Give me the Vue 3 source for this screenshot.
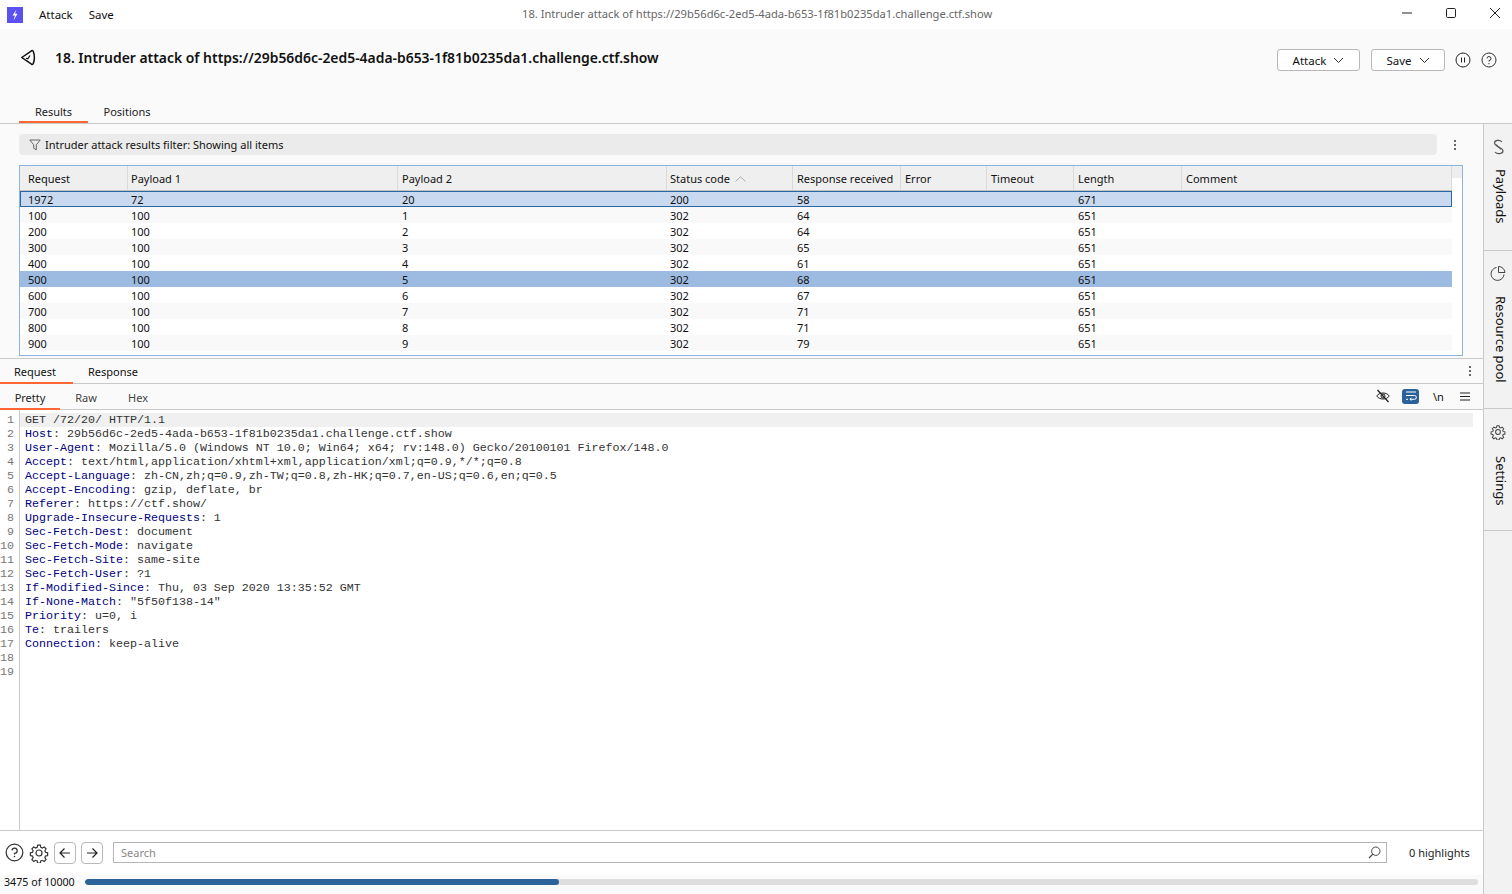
<template>
  <div class="window">
    <div class="titlebar">
      <div class="logo">
        <svg width="16" height="16" viewBox="0 0 16 16"><rect width="16" height="16" fill="#5b50f0" /><path d="M9.5 2.500 5.500 8.500H8L6.500 13.500 10.500 6.800H8Z" fill="#fff" /></svg>
      </div>
      <span class="menu-item">Attack</span>
      <span class="menu-item">Save</span>
      <span class="window-title">18. Intruder attack of https://29b56d6c-2ed5-4ada-b653-1f81b0235da1.challenge.ctf.show</span>
      <div class="window-controls">
        <svg width="12" height="12" viewBox="0 0 12 12"><path d="M1 6H11" stroke="#222" fill="none" /></svg>
        <svg width="12" height="12" viewBox="0 0 12 12"><rect x="1.500" y="1.500" width="9" height="9" rx="1.200" stroke="#222" fill="none" /></svg>
        <svg width="12" height="12" viewBox="0 0 12 12"><path d="M1 1 11 11M11 1 1 11" stroke="#222" fill="none" /></svg>
      </div>
    </div>

    <header class="page-head">
      <div class="head-row">
        <svg class="back-icon" width="16" height="17" viewBox="0 0 16 17"><path d="M1.800 8.500 11.500 1.800Q12.800 1.200 13.300 2.500 15.500 8.500 13.300 14.500 12.800 15.800 11.500 15.200Z" stroke="#111" stroke-width="1.500" stroke-linejoin="round" fill="none" /><path d="M6 9.200 7.800 9.800 10 6.500" stroke="#111" stroke-width="1.200" fill="none" /></svg>
        <h1 class="page-title">18. Intruder attack of https://29b56d6c-2ed5-4ada-b653-1f81b0235da1.challenge.ctf.show</h1>
        <button class="drop-btn attack-btn">Attack <svg width="11" height="7" viewBox="0 0 11 7"><path d="M1 1 5.500 5.500 10 1" stroke="#333" fill="none" /></svg></button>
        <button class="drop-btn save-btn">Save <svg width="11" height="7" viewBox="0 0 11 7"><path d="M1 1 5.500 5.500 10 1" stroke="#333" fill="none" /></svg></button>
        <svg class="head-icon" width="16" height="16" viewBox="0 0 16 16"><circle cx="8" cy="8" r="7" stroke="#222" fill="none" /><path d="M6.500 5.500v5M9.500 5.500v5" stroke="#222" fill="none" /></svg>
        <svg class="head-icon" width="16" height="16" viewBox="0 0 16 16"><circle cx="8" cy="8" r="7" stroke="#333" fill="none" /><path d="M6 6.300A2 2 0 1 1 8 8.500V9.600" stroke="#333" fill="none" /><path d="M8 11v1.200" stroke="#333" fill="none" /></svg>
      </div>
      <div class="top-tabs">
        <span class="tab active results-tab">Results</span>
        <span class="tab positions-tab">Positions</span>
      </div>
    </header>

    <div class="workspace">
      <main class="main">
        <section class="results">
          <div class="filter-row">
            <div class="filter-bar">
              <svg width="12" height="12" viewBox="0 0 12 12"><path d="M.8 1h10.400L7.300 5.800v5L4.700 9.300V5.800Z" stroke="#666" fill="none" /></svg>
              <span>Intruder attack results filter: Showing all items</span>
            </div>
            <svg class="kebab" width="4" height="12" viewBox="0 0 4 12"><circle cx="2" cy="2" r="1.100" fill="#444" /><circle cx="2" cy="6" r="1.100" fill="#444" /><circle cx="2" cy="10" r="1.100" fill="#444" /></svg>
          </div>
          <div class="table-box">
            <div class="table-inner">
              <div class="t-head">
                <div v-for="col in columns" :key="col.label" class="th" :style="{ width: col.width + 'px', paddingLeft: col.pad + 'px' }">
                  {{ col.label }}
                  <svg v-if="col.sorted" class="sort" width="11" height="6" viewBox="0 0 11 6"><path d="M.5 5.500 5.500 .8l5 4.700" stroke="#aaa" fill="none" /></svg>
                </div>
              </div>
              <div v-for="(row, i) in rows" :key="row[0]" class="t-row" :class="{ focused: i === 0, picked: i === 5, alt: i % 2 === 1 }">
                <div v-for="(cell, c) in row" :key="c" class="td" :style="{ width: columns[c].width + 'px', paddingLeft: columns[c].pad + 'px' }">{{ cell }}</div>
              </div>
            </div>
            <div class="scroll-col"></div>
          </div>
        </section>

        <div class="req-tabs">
          <span class="tab2 active req-tab">Request</span>
          <span class="tab2 res-tab">Response</span>
          <svg class="kebab req-kebab" width="4" height="12" viewBox="0 0 4 12"><circle cx="2" cy="2" r="1.100" fill="#444" /><circle cx="2" cy="6" r="1.100" fill="#444" /><circle cx="2" cy="10" r="1.100" fill="#444" /></svg>
        </div>
        <div class="view-tabs">
          <span class="tab3 active pretty-tab">Pretty</span>
          <span class="tab3 raw-tab">Raw</span>
          <span class="tab3 hex-tab">Hex</span>
          <div class="view-tools">
            <svg width="14" height="14" viewBox="0 0 14 14"><path d="M.8 7C3 3 11 3 13.200 7 11 11 3 11 .8 7Z" stroke="#222" fill="none" /><circle cx="7" cy="7" r="2" stroke="#222" fill="none" /><path d="M1.500 1 12.500 13" stroke="#222" stroke-width="1.300" /></svg>
            <span class="wrap-btn"><svg width="12" height="10" viewBox="0 0 12 10"><path d="M1 1h10M1 4.500h8.500a1.800 1.800 0 0 1 0 3.800H5M1 8.300h2M6.500 6.800 5 8.300l1.500 1.300" stroke="#fff" fill="none" /></svg></span>
            <span class="newline">\n</span>
            <svg width="10" height="9" viewBox="0 0 10 9"><path d="M0 1h10M0 4.500h10M0 8h10" stroke="#222" fill="none" /></svg>
          </div>
        </div>

        <div class="editor">
          <div class="gutter">
            <div v-for="n in 19" :key="n">{{ n }}</div>
          </div>
          <div class="code">
            <div v-for="(line, i) in requestLines" :key="i" class="code-line" :class="{ current: i === 0 }"><span class="hkey">{{ line[0] }}</span>{{ line[1] }}</div>
          </div>
        </div>

        <div class="search-row">
          <svg width="19" height="19" viewBox="0 0 20 20"><circle cx="10" cy="10" r="8.800" stroke="#333" stroke-width="1.300" fill="none" /><path d="M7.400 7.800a2.700 2.700 0 1 1 2.600 3v1.400" stroke="#333" stroke-width="1.300" fill="none" /><path d="M10 13.500v1.500" stroke="#333" stroke-width="1.400" /></svg>
          <svg class="bottom-gear" width="20" height="20" viewBox="0 0 20 20"><circle cx="10" cy="10" r="3" stroke="#333" stroke-width="1.200" fill="none" /><path d="M8.500 1.200h3l.5 2.500 1.700.8 2.200-1.300 2 2.200-1.400 2.100.7 1.700 2.400.6v3l-2.400.6-.7 1.700 1.400 2.100-2 2.200-2.200-1.300-1.700.8-.5 2.300h-3l-.5-2.300-1.700-.8-2.200 1.300-2-2.200 1.400-2.100-.7-1.700-2.400-.6v-3l2.400-.6.7-1.700-1.400-2.100 2-2.200 2.200 1.300 1.700-.8Z" transform="translate(1 1) scale(.9)" stroke="#333" stroke-width="1.300" fill="none" /></svg>
          <button class="nav-btn"><svg width="12" height="12" viewBox="0 0 12 12"><path d="M11 6H1.500M5.500 1.500 1 6l4.500 4.500" stroke="#222" stroke-width="1.200" fill="none" /></svg></button>
          <button class="nav-btn"><svg width="12" height="12" viewBox="0 0 12 12"><path d="M1 6h9.500M6.500 1.500 11 6l-4.500 4.500" stroke="#222" stroke-width="1.200" fill="none" /></svg></button>
          <div class="search-box">
            <span>Search</span>
            <svg width="13" height="13" viewBox="0 0 13 13"><circle cx="7.800" cy="5.200" r="4.200" stroke="#444" fill="none" /><path d="M4.800 8.200 1 12" stroke="#444" stroke-width="1.200" /></svg>
          </div>
          <span class="highlights">0 highlights</span>
        </div>
        <div class="progress-row">
          <span class="progress-label">3475 of 10000</span>
          <div class="progress-track"><div class="progress-fill" :style="{ width: '34.03%' }"></div></div>
        </div>
      </main>

      <aside class="rail">
        <div class="rail-item payloads">
          <svg width="13" height="16" viewBox="0 0 13 16"><path d="M10 3C8 .5 2.500 1 2.500 4 2.500 7.500 8.500 7 8.500 10.500" stroke="#555" stroke-width="1.200" fill="none" /><path d="M4.500 5.500C4.500 9 11 8.500 11 12 11 15 5 15.500 3 13" stroke="#555" stroke-width="1.200" fill="none" /></svg>
          <span class="rail-text">Payloads</span>
        </div>
        <div class="rail-item resource">
          <svg width="16" height="16" viewBox="0 0 16 16"><path d="M8.500 1.500A6.500 6.500 0 0 1 15 7.500H8.500Z" stroke="#444" fill="none" /><path d="M6.500 2.500A6.500 6.500 0 1 0 14 9.500" stroke="#444" fill="none" /></svg>
          <span class="rail-text">Resource pool</span>
        </div>
        <div class="rail-item settings">
          <svg width="16" height="16" viewBox="0 0 20 20"><circle cx="10" cy="10" r="3" stroke="#444" stroke-width="1.300" fill="none" /><path d="M8.500 1.200h3l.5 2.500 1.700.8 2.200-1.300 2 2.200-1.400 2.100.7 1.700 2.400.6v3l-2.400.6-.7 1.700 1.400 2.100-2 2.200-2.200-1.300-1.700.8-.5 2.300h-3l-.5-2.300-1.700-.8-2.200 1.300-2-2.200 1.400-2.100-.7-1.700-2.400-.6v-3l2.400-.6.7-1.700-1.400-2.100 2-2.200 2.200 1.300 1.700-.8Z" transform="translate(1 1) scale(.9)" stroke="#444" stroke-width="1.400" fill="none" /></svg>
          <span class="rail-text">Settings</span>
        </div>
      </aside>
    </div>
  </div>
</template>

<script setup>
const columns = [
  { label: 'Request', width: 108, pad: 8 },
  { label: 'Payload 1', width: 270, pad: 3 },
  { label: 'Payload 2', width: 269, pad: 4 },
  { label: 'Status code', width: 126, pad: 3, sorted: true },
  { label: 'Response received', width: 108, pad: 4 },
  { label: 'Error', width: 86, pad: 4 },
  { label: 'Timeout', width: 87, pad: 4 },
  { label: 'Length', width: 108, pad: 4 },
  { label: 'Comment', width: 270, pad: 4 }
]

const rows = [
  ['1972', '72', '20', '200', '58', '', '', '671', ''],
  ['100', '100', '1', '302', '64', '', '', '651', ''],
  ['200', '100', '2', '302', '64', '', '', '651', ''],
  ['300', '100', '3', '302', '65', '', '', '651', ''],
  ['400', '100', '4', '302', '61', '', '', '651', ''],
  ['500', '100', '5', '302', '68', '', '', '651', ''],
  ['600', '100', '6', '302', '67', '', '', '651', ''],
  ['700', '100', '7', '302', '71', '', '', '651', ''],
  ['800', '100', '8', '302', '71', '', '', '651', ''],
  ['900', '100', '9', '302', '79', '', '', '651', '']
]

const requestLines = [
  ['', 'GET /72/20/ HTTP/1.1'],
  ['Host', ': 29b56d6c-2ed5-4ada-b653-1f81b0235da1.challenge.ctf.show'],
  ['User-Agent', ': Mozilla/5.0 (Windows NT 10.0; Win64; x64; rv:148.0) Gecko/20100101 Firefox/148.0'],
  ['Accept', ': text/html,application/xhtml+xml,application/xml;q=0.9,*/*;q=0.8'],
  ['Accept-Language', ': zh-CN,zh;q=0.9,zh-TW;q=0.8,zh-HK;q=0.7,en-US;q=0.6,en;q=0.5'],
  ['Accept-Encoding', ': gzip, deflate, br'],
  ['Referer', ': https://ctf.show/'],
  ['Upgrade-Insecure-Requests', ': 1'],
  ['Sec-Fetch-Dest', ': document'],
  ['Sec-Fetch-Mode', ': navigate'],
  ['Sec-Fetch-Site', ': same-site'],
  ['Sec-Fetch-User', ': ?1'],
  ['If-Modified-Since', ': Thu, 03 Sep 2020 13:35:52 GMT'],
  ['If-None-Match', ': "5f50f138-14"'],
  ['Priority', ': u=0, i'],
  ['Te', ': trailers'],
  ['Connection', ': keep-alive']
]
</script>

<style>
html, body {
  margin: 0;
  overflow: hidden;
}
</style>

<style scoped>
.window {
  width: 1512px;
  height: 894px;
  display: flex;
  flex-direction: column;
  background: #fafafa;
  color: #111;
  font-family: "Noto Sans", "Open Sans", sans-serif;
  font-size: 11px;
  overflow: hidden;
}

.titlebar {
  height: 29px;
  flex: none;
  background: #fff;
  display: flex;
  align-items: center;
  position: relative;
}

.logo {
  width: 16px;
  height: 16px;
  margin-left: 7px;
  margin-right: 16px;
  display: flex;
}

.menu-item {
  margin-right: 16px;
  font-size: 11.500px;
}

.window-title {
  position: absolute;
  left: 522px;
  top: 5px;
  color: #666;
  font-size: 11.170px;
  line-height: 17px;
  white-space: nowrap;
}

.window-controls {
  margin-left: auto;
  display: flex;
  gap: 32px;
  padding-right: 11px;
  margin-top: -3px;
}

.page-head {
  height: 95px;
  flex: none;
  box-sizing: border-box;
  border-bottom: 1px solid #c9c9c9;
  display: flex;
  flex-direction: column;
  justify-content: space-between;
}

.head-row {
  display: flex;
  align-items: center;
  height: 62px;
  padding-right: 15px;
}

.back-icon {
  margin-left: 20px;
  margin-right: 19px;
  margin-top: -6px;
}

.page-title {
  margin: 0;
  flex: 1;
  font-size: 13.920px;
  font-weight: 600;
  line-height: 20px;
  margin-top: -4px;
  white-space: nowrap;
}

.drop-btn {
  height: 22px;
  box-sizing: border-box;
  background: #fff;
  border: 1px solid #b9b7b7;
  border-radius: 3px;
  font: inherit;
  font-size: 11.500px;
  color: inherit;
  display: flex;
  align-items: center;
  justify-content: center;
  gap: 7px;
  padding: 0;
}

.attack-btn {
  width: 83px;
  margin-right: 11px;
}

.save-btn {
  width: 74px;
  margin-right: 10px;
}

.head-icon {
  margin-right: 10px;
}

.head-icon:last-child {
  margin-right: 0;
}

.top-tabs {
  display: flex;
  margin-left: 19px;
  height: 22px;
}

.tab {
  box-sizing: border-box;
  height: 22px;
  line-height: 21px;
  text-align: center;
  color: #222;
}

.tab.active {
  border-bottom: 2px solid #ff6633;
}

.results-tab {
  width: 69px;
}

.positions-tab {
  width: 78px;
}

.workspace {
  flex: 1;
  min-height: 0;
  display: flex;
}

.main {
  width: 1483px;
  flex: none;
  display: flex;
  flex-direction: column;
  min-width: 0;
}

.results {
  height: 235px;
  flex: none;
  box-sizing: border-box;
  padding: 10px 20px 0 19px;
  border-bottom: 1px solid #c9c9c9;
}

.filter-row {
  display: flex;
  align-items: center;
  height: 21px;
  margin-bottom: 10px;
}

.filter-bar {
  width: 1418px;
  height: 21px;
  box-sizing: border-box;
  background: #ebebeb;
  border-radius: 4px;
  display: flex;
  align-items: center;
  gap: 4px;
  padding-left: 10px;
}

.kebab {
  margin-left: 16px;
}

.table-box {
  height: 191px;
  box-sizing: border-box;
  border: 1px solid #8db4dd;
  background: #fff;
  display: flex;
}

.table-inner {
  width: 1432px;
  overflow: hidden;
}

.scroll-col {
  flex: 1;
  background: linear-gradient(#eee 12px, #fff 12px);
}

.t-head {
  display: flex;
  height: 25px;
  background: #efefef;
  border-bottom: 1px solid #c4c4c4;
  box-sizing: border-box;
}

.th {
  flex: none;
  box-sizing: border-box;
  line-height: 26px;
  border-right: 1px solid #d9d9d9;
  white-space: nowrap;
}

.sort {
  margin-left: 2px;
  vertical-align: 1px;
}

.t-row {
  display: flex;
  height: 16px;
  box-sizing: border-box;
}

.t-row.alt {
  background: #f9f9f9;
}

.t-row.focused {
  background: #c9daf0;
  outline: 1px solid #2a66a0;
  outline-offset: -1px;
}

.t-row.picked {
  background: #9dbbe1;
}

.td {
  flex: none;
  box-sizing: border-box;
  height: 16px;
  line-height: 18px;
  white-space: nowrap;
}

.req-tabs {
  height: 25px;
  flex: none;
  box-sizing: border-box;
  display: flex;
  align-items: stretch;
  border-bottom: 1px solid #c9c9c9;
  position: relative;
}

.tab2 {
  box-sizing: border-box;
  line-height: 25px;
  text-align: center;
}

.tab2.active {
  border-bottom: 2px solid #ff6633;
  height: 25px;
}

.req-tab {
  width: 73px;
  padding-right: 3px;
}

.res-tab {
  width: 80px;
}

.req-kebab {
  margin: 6px 11px 0 auto;
}

.view-tabs {
  height: 26px;
  flex: none;
  box-sizing: border-box;
  display: flex;
  border-bottom: 1px solid #c9c9c9;
}

.tab3 {
  box-sizing: border-box;
  line-height: 28px;
  color: #444;
  text-align: center;
}

.tab3.active {
  color: #222;
  border-bottom: 2px solid #ff6633;
  height: 26px;
}

.pretty-tab {
  width: 60px;
}

.raw-tab {
  width: 52px;
}

.hex-tab {
  width: 52px;
}

.view-tools {
  margin-left: auto;
  display: flex;
  align-items: center;
  height: 26px;
  margin-top: -1px;
  padding-right: 13px;
}

.wrap-btn {
  width: 17px;
  height: 15px;
  margin-left: 12px;
  border-radius: 3px;
  background: #2a6299;
  display: flex;
  align-items: center;
  justify-content: center;
}

.newline {
  margin-left: 14px;
  margin-right: 17px;
  width: 10px;
  font-size: 11px;
}

.editor {
  flex: 1;
  min-height: 0;
  display: flex;
  background: #fff;
  font-family: "Liberation Mono", monospace;
  font-size: 11.670px;
  line-height: 14px;
}

.gutter {
  width: 20px;
  flex: none;
  box-sizing: border-box;
  border-right: 1px solid #c9c9c9;
  padding: 3px 5px 0 0;
  text-align: right;
  color: #777;
}

.code {
  width: 1453px;
  padding-top: 3px;
}

.code-line {
  height: 14px;
  white-space: pre;
  padding-left: 5px;
  color: #333;
}

.code-line.current {
  background: #f0f0f0;
}

.hkey {
  color: #000080;
}

.search-row {
  height: 45px;
  flex: none;
  box-sizing: border-box;
  border-top: 1px solid #c9c9c9;
  background: #fff;
  display: flex;
  align-items: center;
  padding: 0 0 1px 5px;
}

.search-row > svg {
  margin-right: 5px;
}

.nav-btn {
  width: 22px;
  height: 22px;
  box-sizing: border-box;
  border: 1px solid #b9b9b9;
  border-radius: 4px;
  background: #fff;
  margin-right: 5px;
  padding: 0;
  display: flex;
  align-items: center;
  justify-content: center;
}

.search-box {
  width: 1274px;
  height: 21px;
  box-sizing: border-box;
  border: 1px solid #b5b5b5;
  margin-left: 5px;
  display: flex;
  align-items: center;
  justify-content: space-between;
  padding: 0 5px 0 7px;
  color: #888;
}

.highlights {
  margin-left: 22px;
  color: #222;
}

.progress-row {
  height: 19px;
  flex: none;
  box-sizing: border-box;
  padding: 0 0 5px 4px;
  display: flex;
  align-items: center;
}

.progress-label {
  width: 81px;
  flex: none;
  font-size: 10.700px;
}

.progress-track {
  width: 1393px;
  height: 6px;
  border-radius: 3px;
  background: #dedede;
  overflow: hidden;
}

.progress-fill {
  height: 100%;
  background: #2a6299;
  border-radius: 3px;
}

.rail {
  flex: 1;
  box-sizing: border-box;
  border-left: 1px solid #c9c9c9;
  background: #f3f2f3;
  display: flex;
  flex-direction: column;
}

.rail-item {
  box-sizing: border-box;
  display: flex;
  flex-direction: column;
  align-items: center;
  border-bottom: 1px solid #c9c9c9;
}

.payloads {
  height: 127px;
  padding-top: 15px;
  gap: 14px;
}

.resource {
  height: 158px;
  padding-top: 14px;
  gap: 15px;
}

.settings {
  height: 122px;
  padding-top: 15px;
  gap: 16px;
}

.rail-text {
  writing-mode: vertical-rl;
  font-size: 13px;
  line-height: 14px;
  color: #111;
  margin-left: 6px;
}
</style>
